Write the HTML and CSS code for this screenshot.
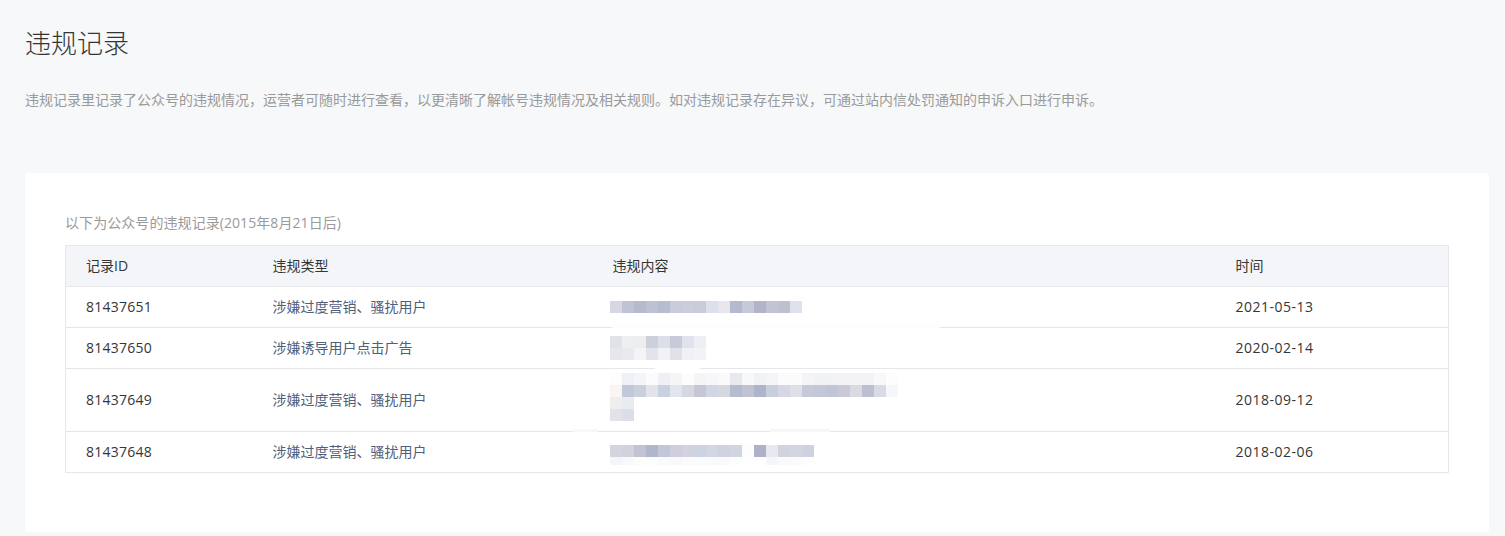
FILE: index.html
```html
<!DOCTYPE html>
<html lang="zh-CN">
<head>
<meta charset="utf-8">
<title>违规记录</title>
<link rel="stylesheet" href="styles.css">
</head>
<body>
<main class="page">
  <h1 class="title">违规记录</h1>
  <p class="desc">违规记录里记录了公众号的违规情况，运营者可随时进行查看，以更清晰了解帐号违规情况及相关规则。如对违规记录存在异议，可通过站内信处罚通知的申诉入口进行申诉。</p>
  <section class="card">
    <p class="caption">以下为公众号的违规记录(2015年8月21日后)</p>
    <div class="table-wrap">
      <table class="records">
        <colgroup><col class="c-id"><col class="c-type"><col class="c-content"><col class="c-time"></colgroup>
        <thead>
          <tr><th>记录ID</th><th>违规类型</th><th>违规内容</th><th>时间</th></tr>
        </thead>
        <tbody>
          <tr>
            <td class="num">81437651</td>
            <td class="type">涉嫌过度营销、骚扰用户</td>
            <td><div class="mosaic m1">
              <i style="background:#d6d7e2"></i><i style="background:#bfc3d3"></i><i style="background:#b6bacc"></i><i style="background:#bcc2d3"></i><i style="background:#b7bdd0"></i><i style="background:#c8ccda"></i><i style="background:#cbcdda"></i><i style="background:#c9cbd9"></i><i style="background:#dde0ea"></i><i style="background:#e8e6ea"></i><i style="background:#b3b9cf"></i><i style="background:#c5c9da"></i><i style="background:#b2b5c9"></i><i style="background:#c2c4d5"></i><i style="background:#bdc0cf"></i><i style="background:#dfe2ec"></i>
            </div></td>
            <td class="date">2021-05-13</td>
          </tr>
          <tr>
            <td class="num">81437650</td>
            <td class="type">涉嫌诱导用户点击广告</td>
            <td><div class="mosaic m2">
              <i style="background:#e1e2e9"></i><i style="background:#eeeff3"></i><i style="background:#eeeef1"></i><i style="background:#ccd0dc"></i><i style="background:#dcdfe8"></i><i style="background:#c6cad9"></i><i style="background:#e0e2ec"></i><i style="background:#eeeff4"></i>
              <i style="background:#e6e7ec"></i><i style="background:#e9eaef"></i><i style="background:#f4f4f7"></i><i style="background:#e3e4eb"></i><i style="background:#f1f2f5"></i><i style="background:#e1e2e9"></i><i style="background:#f0f1f5"></i><i style="background:#f3f3f6"></i>
            </div></td>
            <td class="date">2020-02-14</td>
          </tr>
          <tr class="tall">
            <td class="num">81437649</td>
            <td class="type">涉嫌过度营销、骚扰用户</td>
            <td><div class="mosaic m3">
              <i style="background:#fdfdfd"></i><i style="background:#eef0f5"></i><i style="background:#f3f5f9"></i><i style="background:#fbfbfb"></i><i style="background:#eff0f5"></i><i style="background:#f5f5f8"></i><i style="background:#fefdfd"></i><i style="background:#f6f4f6"></i><i style="background:#f7f7f9"></i><i style="background:#fbf9f9"></i><i style="background:#e8e9ef"></i><i style="background:#f7f8fa"></i><i style="background:#f1f2f6"></i><i style="background:#f4f5f7"></i><i style="background:#fbfbfd"></i><i style="background:#fbfbfc"></i><i style="background:#f3f4f7"></i><i style="background:#f1f2f6"></i><i style="background:#f1f2f6"></i><i style="background:#f3f2f6"></i><i style="background:#f3f3f7"></i><i style="background:#f3f3f6"></i><i style="background:#f8f7f9"></i><i style="background:#fcfdfd"></i>
              <i style="background:#fcf4f0"></i><i style="background:#c0c8da"></i><i style="background:#c9cfdd"></i><i style="background:#e3e4ea"></i><i style="background:#c9d0e0"></i><i style="background:#e1e5ee"></i><i style="background:#d5d8e3"></i><i style="background:#c5c7d7"></i><i style="background:#d2d5e3"></i><i style="background:#d5d7e1"></i><i style="background:#b5bcd0"></i><i style="background:#bfc3d4"></i><i style="background:#afb4ca"></i><i style="background:#c8cfdc"></i><i style="background:#d5d8e4"></i><i style="background:#dde0e9"></i><i style="background:#c6cad8"></i><i style="background:#c3c7d7"></i><i style="background:#c0c6d8"></i><i style="background:#c9c9d8"></i><i style="background:#d8dbe2"></i><i style="background:#bcbfd0"></i><i style="background:#d8dbe5"></i><i style="background:#f5f8fb"></i>
              <i style="background:#eeeef1"></i><i style="background:#e8ebf0"></i><b class="rest"></b>
              <i style="background:#e4e2e9"></i><i style="background:#dbdee9"></i><b class="rest"></b>
            </div></td>
            <td class="date">2018-09-12</td>
          </tr>
          <tr>
            <td class="num">81437648</td>
            <td class="type">涉嫌过度营销、骚扰用户</td>
            <td><div class="mosaic m4">
              <i style="background:#d4d4e0"></i><i style="background:#d0d2dc"></i><i style="background:#c1c3d3"></i><i style="background:#b0b6cb"></i><i style="background:#c0c8d8"></i><i style="background:#d0cedc"></i><i style="background:#d2d3de"></i><i style="background:#ccd4e1"></i><i style="background:#d3d6e3"></i><i style="background:#d1d2e0"></i><i style="background:#d1d5e1"></i><i style="background:#fdfdfe"></i><i style="background:#aeb1c8"></i><i style="background:#e6e9ef"></i><i style="background:#d3d3df"></i><i style="background:#d3d5e0"></i><i style="background:#ced1df"></i>
              <i style="background:#f4f5f8"></i><i style="background:#f8f9fc"></i><i style="background:#fdfcfc"></i><i style="background:#fcfcfd"></i><i style="background:#fbfbfc"></i><i style="background:#f9f9fb"></i><i style="background:#fcfbfc"></i><i style="background:#fbfbfd"></i><i style="background:#fafafb"></i><i style="background:#f9fafc"></i><i style="background:#fdfdfd"></i><i style="background:#fefefe"></i><i style="background:#fefefe"></i><i style="background:#f5f6f9"></i><i style="background:#fafafc"></i><i style="background:#fbfbfd"></i><i style="background:#fdfdfd"></i>
            </div></td>
            <td class="date">2018-02-06</td>
          </tr>
        </tbody>
      </table>
      <span class="smudge s1"></span>
      <span class="smudge s2"></span>
      <span class="smudge s3"></span>
      <span class="smudge s4"></span>
    </div>
  </section>
</main>
</body>
</html>
```

FILE: styles.css
```css
* { box-sizing: border-box; }
html, body { margin: 0; padding: 0; }
body {
  background: #f6f8f9;
  font-family: "Open Sans", "Noto Sans CJK SC", sans-serif;
  font-size: 14px;
  color: #353535;
  height: 536px;
  overflow: hidden;
}
.page { padding: 23px 16px 0 25px; }
.title {
  margin: 0;
  font-family: "Noto Sans CJK SC", sans-serif;
  font-size: 26px;
  font-weight: 300;
  line-height: 38px;
  color: #353535;
}
.desc {
  margin: 28px 0 0;
  font-family: "Noto Sans CJK SC", sans-serif;
  line-height: 20px;
  color: #9a9a9a;
}
.card {
  margin-top: 64px;
  height: 359px;
  padding: 39px 40px 0;
  background: #fff;
  border-radius: 3px;
}
.caption {
  margin: 0 0 11px;
  line-height: 22px;
  color: #9a9a9a;
  letter-spacing: 0.07px;
}
.table-wrap { position: relative; }
.records {
  width: 100%;
  table-layout: fixed;
  border-collapse: collapse;
  border: 1px solid #e7e7eb;
}
.c-id { width: 187px; }
.c-type { width: 340px; }
.c-content { width: 623px; }
th, td {
  padding: 0 0 2px 20px;
  text-align: left;
  font-weight: 400;
  border-bottom: 1px solid #e7e7eb;
  height: 41px;
  color: #353535;
}
th { background: #f4f5f9; }
td:nth-child(3) { padding-bottom: 0; }
.tall td { height: 63px; }
td.num { letter-spacing: 0.25px; }
td.date { letter-spacing: 0.5px; }
td.type { color: #50607a; font-family: "Noto Sans CJK SC", sans-serif; }
.mosaic {
  display: grid;
  grid-template-columns: repeat(24, 12px);
  grid-auto-rows: 12px;
  margin-left: -3px;
}
.mosaic i { display: block; }
.rest { grid-column: span 22; }
.m3 { margin-bottom: 6px; }
.m4 { margin-top: 5px; grid-template-columns: repeat(17, 12px); grid-template-rows: 12px 8px; }
.m1 { grid-template-columns: repeat(16, 12px); }
.m2 { grid-template-columns: repeat(8, 12px); margin-top: -1px; }
.smudge { position: absolute; display: block; height: 3px; background: #fcfcfc; }
.s1 { left: 547px; width: 328px; top: 80px; }
.s2 { left: 590px; width: 45px; top: 121px; background: #fff; }
.s3 { left: 508px; width: 25px; top: 184px; background: #f8f8f8; }
.s4 { left: 705px; width: 60px; top: 184px; background: #f6f6f6; }
```
